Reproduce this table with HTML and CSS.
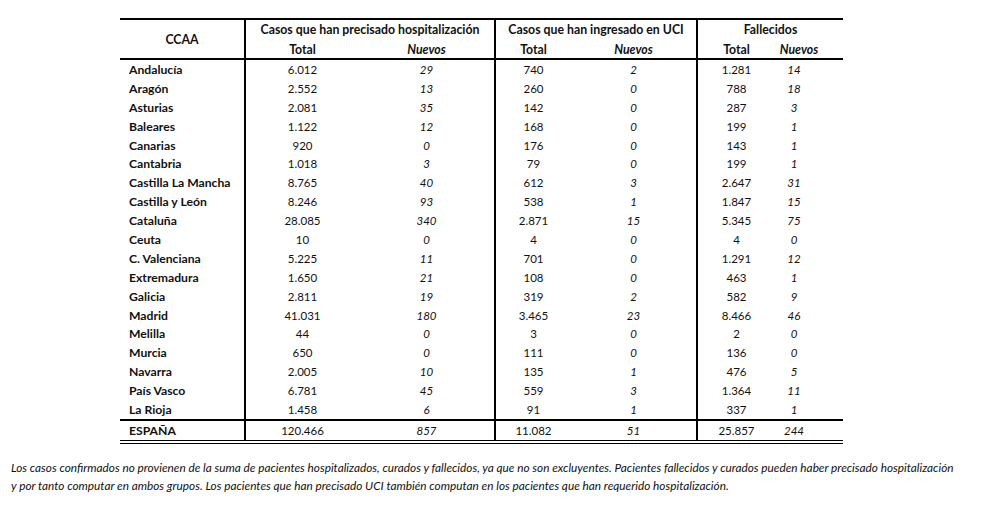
FILE: index.html
```html
<!DOCTYPE html>
<html lang="es">
<head>
<meta charset="utf-8">
<title>Casos COVID-19 por CCAA</title>
<link rel="stylesheet" href="styles.css">
</head>
<body>
<div class="page">
  <table class="data">
    <colgroup>
      <col class="c-name"><col class="c-ht"><col class="c-hn"><col class="c-ut"><col class="c-un"><col class="c-ft"><col class="c-fn">
    </colgroup>
    <thead>
      <tr class="group-row">
        <th rowspan="2" class="ccaa">CCAA</th>
        <th colspan="2" class="grp sep">Casos que han precisado hospitalización</th>
        <th colspan="2" class="grp sep">Casos que han ingresado en UCI</th>
        <th colspan="2" class="grp sep">Fallecidos</th>
      </tr>
      <tr class="sub-row">
        <th class="sep tot">Total</th><th class="nv">Nuevos</th>
        <th class="sep tot">Total</th><th class="nv">Nuevos</th>
        <th class="sep tot">Total</th><th class="nv nv-last nv-head">Nuevos</th>
      </tr>
    </thead>
    <tbody>
      <tr><td class="name">Andalucía</td><td class="sep">6.012</td><td class="nv">29</td><td class="sep">740</td><td class="nv">2</td><td class="sep">1.281</td><td class="nv nv-last">14</td></tr>
      <tr><td class="name">Aragón</td><td class="sep">2.552</td><td class="nv">13</td><td class="sep">260</td><td class="nv">0</td><td class="sep">788</td><td class="nv nv-last">18</td></tr>
      <tr><td class="name">Asturias</td><td class="sep">2.081</td><td class="nv">35</td><td class="sep">142</td><td class="nv">0</td><td class="sep">287</td><td class="nv nv-last">3</td></tr>
      <tr><td class="name">Baleares</td><td class="sep">1.122</td><td class="nv">12</td><td class="sep">168</td><td class="nv">0</td><td class="sep">199</td><td class="nv nv-last">1</td></tr>
      <tr><td class="name">Canarias</td><td class="sep">920</td><td class="nv">0</td><td class="sep">176</td><td class="nv">0</td><td class="sep">143</td><td class="nv nv-last">1</td></tr>
      <tr><td class="name">Cantabria</td><td class="sep">1.018</td><td class="nv">3</td><td class="sep">79</td><td class="nv">0</td><td class="sep">199</td><td class="nv nv-last">1</td></tr>
      <tr><td class="name">Castilla La Mancha</td><td class="sep">8.765</td><td class="nv">40</td><td class="sep">612</td><td class="nv">3</td><td class="sep">2.647</td><td class="nv nv-last">31</td></tr>
      <tr><td class="name">Castilla y León</td><td class="sep">8.246</td><td class="nv">93</td><td class="sep">538</td><td class="nv">1</td><td class="sep">1.847</td><td class="nv nv-last">15</td></tr>
      <tr><td class="name">Cataluña</td><td class="sep">28.085</td><td class="nv">340</td><td class="sep">2.871</td><td class="nv">15</td><td class="sep">5.345</td><td class="nv nv-last">75</td></tr>
      <tr><td class="name">Ceuta</td><td class="sep">10</td><td class="nv">0</td><td class="sep">4</td><td class="nv">0</td><td class="sep">4</td><td class="nv nv-last">0</td></tr>
      <tr><td class="name">C. Valenciana</td><td class="sep">5.225</td><td class="nv">11</td><td class="sep">701</td><td class="nv">0</td><td class="sep">1.291</td><td class="nv nv-last">12</td></tr>
      <tr><td class="name">Extremadura</td><td class="sep">1.650</td><td class="nv">21</td><td class="sep">108</td><td class="nv">0</td><td class="sep">463</td><td class="nv nv-last">1</td></tr>
      <tr><td class="name">Galicia</td><td class="sep">2.811</td><td class="nv">19</td><td class="sep">319</td><td class="nv">2</td><td class="sep">582</td><td class="nv nv-last">9</td></tr>
      <tr><td class="name">Madrid</td><td class="sep">41.031</td><td class="nv">180</td><td class="sep">3.465</td><td class="nv">23</td><td class="sep">8.466</td><td class="nv nv-last">46</td></tr>
      <tr><td class="name">Melilla</td><td class="sep">44</td><td class="nv">0</td><td class="sep">3</td><td class="nv">0</td><td class="sep">2</td><td class="nv nv-last">0</td></tr>
      <tr><td class="name">Murcia</td><td class="sep">650</td><td class="nv">0</td><td class="sep">111</td><td class="nv">0</td><td class="sep">136</td><td class="nv nv-last">0</td></tr>
      <tr><td class="name">Navarra</td><td class="sep">2.005</td><td class="nv">10</td><td class="sep">135</td><td class="nv">1</td><td class="sep">476</td><td class="nv nv-last">5</td></tr>
      <tr><td class="name">País Vasco</td><td class="sep">6.781</td><td class="nv">45</td><td class="sep">559</td><td class="nv">3</td><td class="sep">1.364</td><td class="nv nv-last">11</td></tr>
      <tr><td class="name">La Rioja</td><td class="sep">1.458</td><td class="nv">6</td><td class="sep">91</td><td class="nv">1</td><td class="sep">337</td><td class="nv nv-last">1</td></tr>
    </tbody>
    <tfoot>
      <tr class="total-row"><td class="name">ESPAÑA</td><td class="sep">120.466</td><td class="nv">857</td><td class="sep">11.082</td><td class="nv">51</td><td class="sep">25.857</td><td class="nv nv-last">244</td></tr>
    </tfoot>
  </table>
  <p class="note">Los casos confirmados no provienen de la suma de pacientes hospitalizados, curados y fallecidos, ya que no son excluyentes. Pacientes fallecidos y curados pueden haber precisado hospitalización<br>y por tanto computar en ambos grupos. Los pacientes que han precisado UCI también computan en los pacientes que han requerido hospitalización.</p>
</div>
</body>
</html>
```

FILE: styles.css
```css
html, body {
  margin: 0;
  padding: 0;
  background: #ffffff;
}

body {
  font-family: "Lato", "Liberation Sans", sans-serif;
  color: #111111;
}

.page {
  padding-top: 18px;
}

.data {
  margin-left: 120px;
  width: 723px;
  border-collapse: collapse;
  table-layout: fixed;
  font-size: 11.5px;
}

.c-name { width: 125px; }
.c-ht { width: 114px; }
.c-hn { width: 136px; }
.c-ut { width: 76px; }
.c-un { width: 126px; }
.c-ft { width: 78px; }
.c-fn { width: 68px; }

.data th,
.data td {
  padding: 0;
  text-align: center;
  white-space: nowrap;
  font-weight: 400;
}

.data th {
  font-weight: 700;
  font-size: 12.3px;
}

.group-row th {
  border-top: 2px solid #000;
  height: 18px;
  vertical-align: top;
  padding-top: 2px;
}

.group-row th.ccaa {
  vertical-align: middle;
  padding-top: 0;
}

.sub-row th {
  height: 18px;
  border-bottom: 2px solid #000;
}

.data th.ccaa {
  border-top: 2px solid #000;
  border-bottom: 2px solid #000;
}

.sep {
  border-left: 2px solid #000;
}

.nv {
  font-style: italic;
}

.data .nv-last {
  padding-right: 30px;
}

.data .nv-head {
  padding-right: 20px;
}

.data tbody td {
  height: 18.9px;
}

.data td.name {
  text-align: left;
  padding-left: 9px;
  font-weight: 700;
  font-size: 12.2px;
}

.total-row td {
  height: 19px;
  border-top: 2px solid #000;
  border-bottom: 4px double #000;
}

.note {
  margin: 15px 0 0 11px;
  font-size: 11.8px;
  line-height: 18px;
  font-style: italic;
  color: #111111;
  white-space: nowrap;
}
```
